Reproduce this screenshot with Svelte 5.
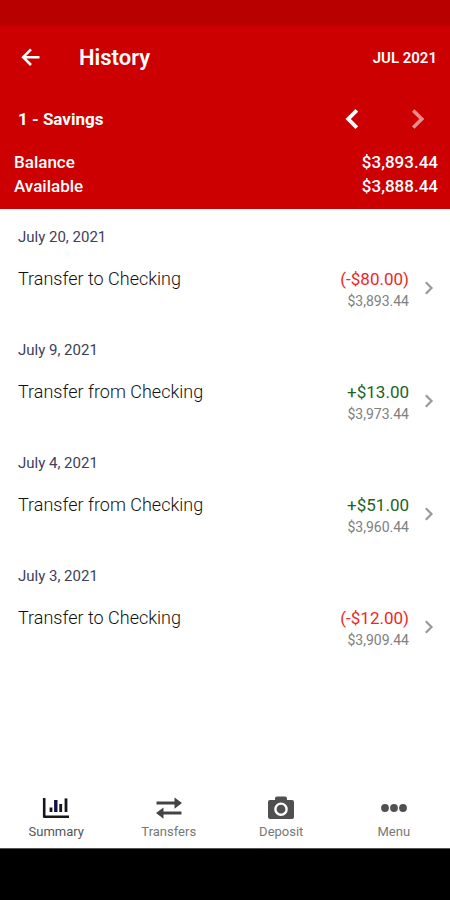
<script>
  const transactions = [
    { date: 'July 20, 2021', title: 'Transfer to Checking', amount: '(-$80.00)', balance: '$3,893.44', debit: true },
    { date: 'July 9, 2021', title: 'Transfer from Checking', amount: '+$13.00', balance: '$3,973.44', debit: false },
    { date: 'July 4, 2021', title: 'Transfer from Checking', amount: '+$51.00', balance: '$3,960.44', debit: false },
    { date: 'July 3, 2021', title: 'Transfer to Checking', amount: '(-$12.00)', balance: '$3,909.44', debit: true }
  ];
</script>

<div class="screen">
  <header>
    <div class="status"></div>
    <div class="bar">
      <button class="back" aria-label="Back">
        <svg width="20" height="20" viewBox="0 0 20 20"><path d="M19.5 9.2H4M11 1.4 3.2 9.2 11 17" fill="none" stroke="currentColor" stroke-width="2.6" /></svg>
      </button>
      <h1>History</h1>
      <button class="month">JUL 2021</button>
    </div>
    <div class="account">
      <h2>1 - Savings</h2>
      <button aria-label="Previous account">
        <svg width="14" height="20" viewBox="0 0 14 20"><path d="M11.8 1.4 3.2 10l8.6 8.6" fill="none" stroke="currentColor" stroke-width="3.8" /></svg>
      </button>
      <button class="faded" aria-label="Next account" disabled>
        <svg width="14" height="20" viewBox="0 0 14 20"><path d="M2.2 1.4 10.8 10l-8.6 8.6" fill="none" stroke="currentColor" stroke-width="3.6" /></svg>
      </button>
    </div>
    <dl>
      <div><dt>Balance</dt><dd>$3,893.44</dd></div>
      <div><dt>Available</dt><dd>$3,888.44</dd></div>
    </dl>
  </header>

  <main>
    {#each transactions as t}
      <section>
        <h3>{t.date}</h3>
        <button class="row">
          <span class="title">{t.title}</span>
          <span class="figures">
            <span class="amount" class:debit={t.debit}>{t.amount}</span>
            <span class="balance">{t.balance}</span>
          </span>
          <svg width="10" height="16" viewBox="0 0 10 16"><path d="M1.8 1.3 7.5 7l-5.7 5.7" fill="none" stroke="#999" stroke-width="2.2" /></svg>
        </button>
      </section>
    {/each}
  </main>

  <nav>
    <a href="#summary" class="active" aria-current="page">
      <svg width="28" height="24" viewBox="0 0 28 24" fill="none" stroke="#15151b">
        <path d="M2.2 2v18.8H27" stroke-width="2.6" stroke-linejoin="round" />
        <path d="M9 16v-4.5M18.7 16V8" stroke-width="2.8" />
        <path d="M13.8 16V4" stroke="#10104a" stroke-width="3.4" />
        <path d="M24 16V2.4" stroke-width="2.8" />
      </svg>
      <span>Summary</span>
    </a>
    <a href="#transfers">
      <svg width="28" height="24" viewBox="0 0 28 24" fill="#444">
        <path d="M1.5 5.6H19.5V1.4L27 7.1l-7.5 5.7V8.6H1.5zM26.5 15.6H8.5v-4.2L1 17.1l7.5 5.7v-4.2h18z" />
      </svg>
      <span>Transfers</span>
    </a>
    <a href="#deposit">
      <svg width="28" height="24" viewBox="0 0 28 24" fill="#505050">
        <path d="M3 4h5V2.5Q8 .5 10 .5h8q2 0 2 2V4h5q2 0 2 2v15q0 2-2 2H3q-2 0-2-2V6q0-2 2-2z" />
        <circle cx="14" cy="13.2" r="5.6" fill="#505050" stroke="#fff" stroke-width="2.4" />
      </svg>
      <span>Deposit</span>
    </a>
    <a href="#menu">
      <svg width="28" height="24" viewBox="0 0 28 24" fill="#505050">
        <circle cx="5" cy="12" r="3.9" /><circle cx="14" cy="12" r="3.9" /><circle cx="23" cy="12" r="3.9" />
      </svg>
      <span>Menu</span>
    </a>
  </nav>
  <div class="system"></div>
</div>

<style>
  .screen {
    min-height: 100vh;
    display: flex;
    flex-direction: column;
    background: #fff;
    font-family: Roboto, "Liberation Sans", sans-serif;
  }
  h1, h2, h3, dl, dd { margin: 0; }
  button {
    border: 0;
    padding: 0;
    background: none;
    color: inherit;
    font: inherit;
    cursor: pointer;
  }
  svg { display: block; flex: none; }
  header { background: #cc0000; color: #fff; padding-bottom: 11px; }
  .status { height: 26px; background: #b90000; }
  .bar {
    display: flex;
    align-items: center;
    height: 64px;
    padding: 0 13px 0 20px;
  }
  .back { width: 59px; }
  h1 { flex: 1; font-size: 22px; line-height: 28px; font-weight: 600; }
  .month { font-size: 15px; font-weight: 600; }
  .account {
    display: flex;
    align-items: center;
    gap: 52px;
    height: 58px;
    padding: 0 25px 0 18px;
  }
  h2 { flex: 1; font-size: 17px; line-height: 24px; font-weight: 700; }
  .faded { opacity: 0.55; cursor: default; }
  dl { padding: 2px 12px 0 14px; font-size: 17px; line-height: 24px; font-weight: 500; }
  dl div { display: flex; justify-content: space-between; }
  main { flex: 1; padding-top: 16px; }
  section { height: 113px; }
  h3 { padding: 0 18px; font-size: 15px; line-height: 24px; font-weight: 400; color: #40405a; }
  .row {
    display: flex;
    align-items: center;
    width: 100%;
    padding: 18px 16px 0 18px;
    text-align: left;
  }
  .title { flex: 1; align-self: flex-start; font-size: 18px; line-height: 24px; font-weight: 300; color: #111; }
  .figures { display: flex; flex-direction: column; text-align: right; margin-right: 15px; }
  .amount { font-size: 17px; line-height: 24px; color: #1b6322; }
  .debit { color: #f02626; }
  .balance { font-size: 14px; line-height: 20px; color: #808080; }
  nav { display: flex; height: 54px; }
  nav a {
    flex: 1;
    display: flex;
    flex-direction: column;
    align-items: center;
    gap: 3px;
    padding-top: 2px;
    font-size: 13px;
    line-height: 18px;
    color: #777;
    text-decoration: none;
  }
  nav .active { color: #555; }
  .system { height: 51px; background: #000; border-top: 1px solid #555; }
</style>
